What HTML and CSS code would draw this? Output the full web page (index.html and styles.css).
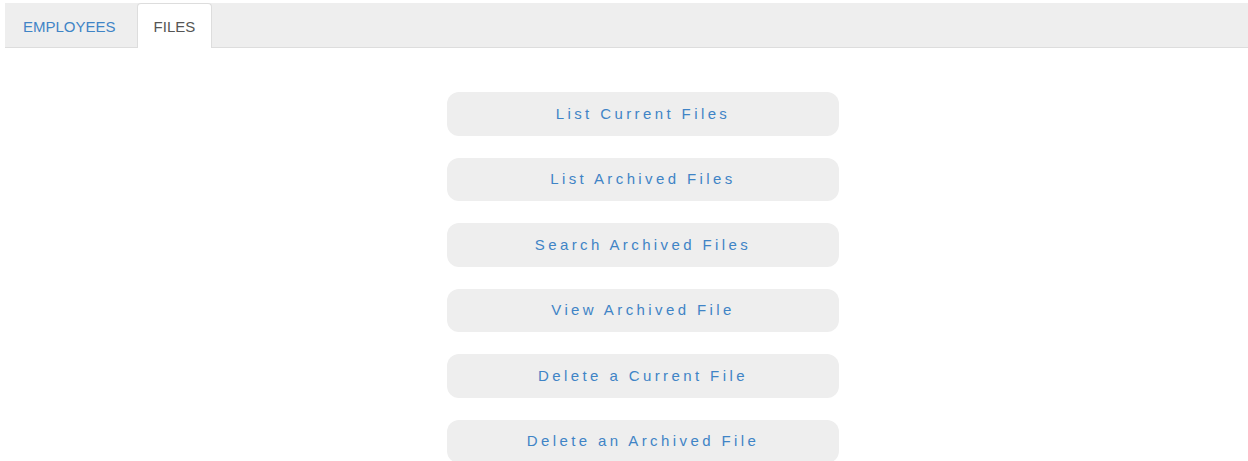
FILE: index.html
```html
<!DOCTYPE html>
<html lang="en">
<head>
<meta charset="utf-8">
<title>Files</title>
<link rel="stylesheet" href="styles.css">
</head>
<body>
<nav class="tabs">
  <a class="tab" href="#">EMPLOYEES</a>
  <a class="tab tab-active" href="#">FILES</a>
</nav>
<main class="actions">
  <a class="action" href="#">List Current Files</a>
  <a class="action" href="#">List Archived Files</a>
  <a class="action" href="#">Search Archived Files</a>
  <a class="action" href="#">View Archived File</a>
  <a class="action" href="#">Delete a Current File</a>
  <a class="action" href="#">Delete an Archived File</a>
</main>
</body>
</html>
```
FILE: styles.css
```css
html, body {
  margin: 0;
  padding: 0;
  background: #ffffff;
}

body {
  padding: 3px 0 0 5px;
  font-family: "Liberation Sans", Arial, sans-serif;
}

.tabs {
  display: flex;
  height: 44px;
  background: #eeeeee;
  border-bottom: 1px solid #dddddd;
}

.tab {
  display: flex;
  align-items: center;
  padding: 0 16px 0 17px;
  margin-right: 4px;
  border: 1px solid transparent;
  border-bottom: none;
  border-radius: 4px 4px 0 0;
  font-size: 15px;
  color: #3f84c6;
  text-decoration: none;
  margin-bottom: -1px;
}

.tab-active {
  padding: 0 16px;
  background: #ffffff;
  border-color: #dddddd;
  color: #555555;
}

.actions {
  display: flex;
  flex-direction: column;
  align-items: center;
  gap: 22px;
  padding: 44px 0 0 33px;
}

.action {
  display: flex;
  align-items: center;
  justify-content: center;
  width: 392px;
  height: 43.5px;
  padding-bottom: 1px;
  box-sizing: border-box;
  border-radius: 12px;
  background: #eeeeee;
  color: #3f84c6;
  font-size: 15px;
  letter-spacing: 3.4px;
  text-decoration: none;
}
```
